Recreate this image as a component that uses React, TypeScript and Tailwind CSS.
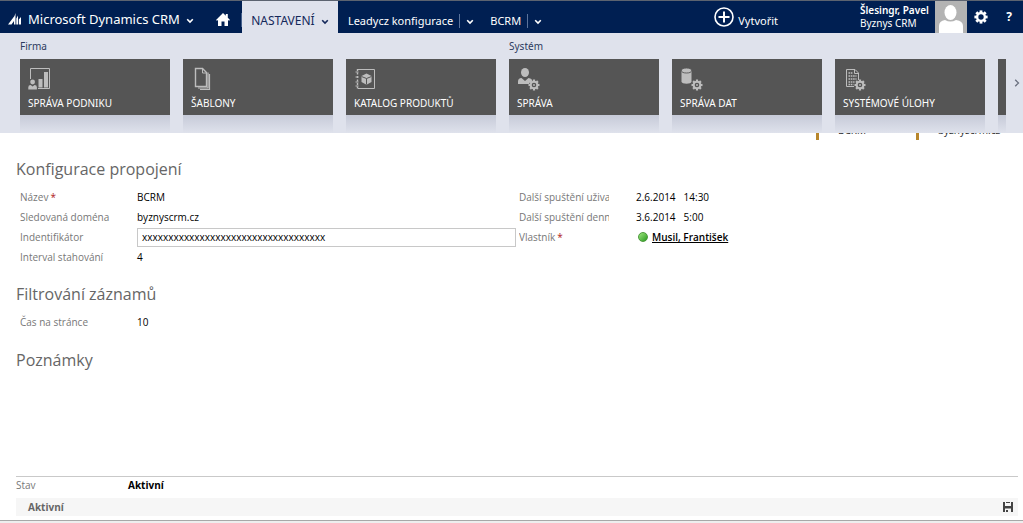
import type { ReactNode } from "react";

function Chevron({ className = "" }: { className?: string }) {
  return (
    <svg viewBox="0 0 8 6" className={`h-1.5 w-2 ${className}`} fill="none" stroke="currentColor" strokeWidth="1.6" aria-hidden="true">
      <path d="M1.2 1.2 4 4 6.8 1.2" />
    </svg>
  );
}

function Gear({ x, y, r, hole }: { x: number; y: number; r: number; hole: number }) {
  return (
    <g transform={`translate(${x} ${y})`}>
      {[0, 45, 90, 135].map((a) => (
        <rect key={a} x={-r * 0.2} y={-r} width={r * 0.4} height={r * 2} transform={`rotate(${a})`} fill="currentColor" />
      ))}
      <circle r={r * 0.78} fill="currentColor" />
      <circle r={hole} fill="#555555" />
      <circle r={hole * 0.4} fill="currentColor" />
    </g>
  );
}

function TileIcon({ children }: { children: ReactNode }) {
  return (
    <svg viewBox="0 0 24 24" className="h-6 w-6 text-[#bdbdbd]" fill="none" stroke="currentColor" aria-hidden="true">
      {children}
    </svg>
  );
}

const icons = {
  business: (
    <TileIcon>
      <path d="M2.5 12V1.5h19v20H10" />
      <g fill="currentColor" stroke="none">
        <circle cx="4.6" cy="15" r="2.4" />
        <path d="M.3 22.5v-2.2q0-2.3 2.4-2.3l1.9 1.6L6.5 18q2.400 0 2.400 2.300v2.200z" />
        <path d="M10.500 12h4v8.500h-4zM16 5h4v15.500h-4z" />
      </g>
    </TileIcon>
  ),
  templates: (
    <TileIcon>
      <path d="M4.500 1.500h7l4 4v14h-11z" strokeWidth="1.400" />
      <path d="M11.500 1.500v4.500h4" />
      <path d="M17 5.500v15.500H7M18.500 7v15.500H9" strokeWidth="1.200" />
    </TileIcon>
  ),
  catalog: (
    <TileIcon>
      <path d="M4 2.500h16.500v19H4" />
      <path d="M3.500 2v20" strokeDasharray="2 1.500" strokeWidth="1.400" />
      <path d="M1.500 5h3M1.500 10h3M1.500 15h3M1.500 19h3" strokeWidth="1" />
      <path d="m12.500 6.500 5 2.500v6l-5 2.700-5-2.700V9z" fill="currentColor" stroke="none" />
      <path d="m7.500 9.500 5 2 5-2M12.500 11.500v6" stroke="#555555" />
    </TileIcon>
  ),
  admin: (
    <TileIcon>
      <g fill="currentColor" stroke="none">
        <ellipse cx="8" cy="5.500" rx="4" ry="4.500" />
        <path d="M1 17v-2.500Q1 11 4.500 11L8 14l3.500-3q3 0 4 2.500-3 1-3.500 3.500z" />
        <Gear x={17} y={18} r={5.500} hole={2.300} />
      </g>
    </TileIcon>
  ),
  data: (
    <TileIcon>
      <g fill="currentColor" stroke="none">
        <path d="M1.500 4v10.500c0 3 10 3 10 0V4z" />
        <ellipse cx="6.500" cy="3.500" rx="5" ry="2.500" stroke="#555555" strokeWidth=".9" />
        <Gear x={17} y={18} r={5.500} hole={2.300} />
      </g>
    </TileIcon>
  ),
  jobs: (
    <TileIcon>
      <path d="M11 19.500H3.500v-17h8.500l3.500 3.500v7" />
      <path d="M11.500 2.500v4h4" />
      <path d="M5.500 6h4M5.500 9h8M5.500 12h8M5.500 15h6M5.500 17.500h5" strokeDasharray="1.600 .7" strokeWidth="1.500" />
      <g stroke="none">
        <Gear x={17} y={18} r={5.500} hole={2.300} />
      </g>
    </TileIcon>
  ),
};

const groups: { title: string; tiles: { label: string; icon?: ReactNode }[] }[] = [
  {
    title: "Firma",
    tiles: [
      { label: "SPRÁVA PODNIKU", icon: icons.business },
      { label: "ŠABLONY", icon: icons.templates },
      { label: "KATALOG PRODUKTŮ", icon: icons.catalog },
    ],
  },
  {
    title: "Systém",
    tiles: [
      { label: "SPRÁVA", icon: icons.admin },
      { label: "SPRÁVA DAT", icon: icons.data },
      { label: "SYSTÉMOVÉ ÚLOHY", icon: icons.jobs },
      { label: "" },
    ],
  },
];

function TopBar() {
  return (
    <header className="flex h-[33px] items-stretch whitespace-nowrap border-t border-[#5c6370] bg-[#001f52] text-white">
      <button type="button" className="flex items-center pl-2 pt-1">
        <svg viewBox="0 0 14 12" className="mr-1.5 h-3 w-3.5" fill="currentColor" aria-hidden="true">
          <path d="M0 11.500 6.500 3l1-3v11.500H6V8l-2.500 3.500zM8.300 11.500V5.500L10 2.500v9zM10.800 11.500V6.500L13 4v7.500z" />
        </svg>
        <span className="text-[13px] leading-5">Microsoft Dynamics CRM</span>
        <Chevron className="ml-1.5 mt-1" />
      </button>
      <button type="button" aria-label="Domů" className="ml-[22px] flex items-center pt-1">
        <svg viewBox="0 0 14 13" className="h-[13px] w-3.5" fill="currentColor" aria-hidden="true">
          <path d="M7 0 9.800 2.700V1h2v3.700L14 7l-1 .8-1-.9V13H8.500V8.500h-3V13H2V6.900l-1 .9L0 7z" />
        </svg>
      </button>
      <nav className="ml-[11px] flex items-stretch text-[11px]">
        <span className="mb-1.5 mt-3 w-px bg-[#44608c]" />
        <button type="button" className="flex w-24 items-center justify-center bg-[#dfe2ec] pt-2 text-[12px] text-[#14285a]">
          NASTAVENÍ
          <Chevron className="ml-1.5 mt-0.5" />
        </button>
        <button type="button" className="ml-2.5 flex items-center pt-2">
          Leadycz konfigurace
          <span className="ml-1.5 h-3.5 w-px bg-[#5a739c]" />
          <Chevron className="ml-1.5 mt-0.5" />
        </button>
        <button type="button" className="ml-4 flex items-center pt-2">
          BCRM
          <span className="ml-1.5 h-3.5 w-px bg-[#5a739c]" />
          <Chevron className="ml-1.5 mt-0.5" />
        </button>
      </nav>
      <div className="ml-auto flex items-stretch">
        <button type="button" className="mr-[82px] flex items-center gap-1 text-[11px]">
          <svg viewBox="0 0 20 20" className="h-5 w-5" fill="none" stroke="currentColor" strokeWidth="1.600" aria-hidden="true">
            <circle cx="10" cy="10" r="9" />
            <path d="M10 4.500v11M4.500 10h11" strokeWidth="2" />
          </svg>
          <span className="pt-2">Vytvořit</span>
        </button>
        <div className="flex w-[75px] flex-col justify-center text-[10px] leading-[13px]">
          <span className="font-semibold">Šlesingr, Pavel</span>
          <span>Byznys CRM</span>
        </div>
        <svg viewBox="0 0 32 32" className="h-8 w-8 bg-[#b3b3b3]" fill="#ffffff" aria-hidden="true">
          <ellipse cx="15.500" cy="11.500" rx="6" ry="7.500" />
          <path d="M4 32v-7q0-5 6-6 5.500 3 11 0 7 1 7 6v7z" />
        </svg>
        <button type="button" aria-label="Nastavení" className="flex w-7 items-center justify-center">
          <svg viewBox="-7 -7 14 14" className="h-3.5 w-3.5" fill="currentColor" aria-hidden="true">
            {[0, 45, 90, 135].map((a) => (
              <rect key={a} x="-1.400" y="-6.600" width="2.800" height="13.200" transform={`rotate(${a})`} />
            ))}
            <circle r="5" />
            <circle r="2.700" fill="#001f52" />
          </svg>
        </button>
        <button type="button" aria-label="Nápověda" className="flex w-7 items-center justify-center text-[12px] font-bold">
          ?
        </button>
      </div>
    </header>
  );
}

function Ribbon() {
  return (
    <section className="flex bg-[#dfe2ec]">
      <div className="flex flex-1 gap-[13px] overflow-hidden pl-5">
        {groups.map((g) => (
          <div key={g.title} className="shrink-0">
            <h2 className="h-[26px] pt-1 text-[10px] leading-[18px] text-[#2c3a5e]">{g.title}</h2>
            <div className="flex gap-[13px]">
              {g.tiles.map((t) => (
                <div key={t.label} className="w-[150px]">
                  <button type="button" className="flex h-14 w-full flex-col items-start bg-[#555555] px-2 pt-2 text-left text-[10px] leading-4 text-white">
                    <span className="h-6">{t.icon}</span>
                    <span className="pt-1">{t.label}</span>
                  </button>
                  <div className="h-[18px] bg-linear-to-b from-[#c6cad8] to-[#dfe2ec]" />
                </div>
              ))}
            </div>
          </div>
        ))}
      </div>
      <button type="button" aria-label="Další" className="flex w-[17px] items-center justify-center pl-1 text-[#6b7180]">
        <svg viewBox="0 0 6 8" className="h-2 w-1.5" fill="none" stroke="currentColor" strokeWidth="1.300" aria-hidden="true">
          <path d="m1.200.8 3.300 3.200-3.300 3.200" />
        </svg>
      </button>
    </section>
  );
}

function SummaryStrip() {
  return (
    <div className="flex h-[7px] items-end justify-end overflow-hidden leading-4 text-[#333333]">
      {["BCRM", "byznyscrm.cz"].map((v) => (
        <div key={v} className="flex h-5 w-[100px] border-l-[3px] border-[#b8862b] pl-[19px] pt-0.5">
          <span>{v}</span>
        </div>
      ))}
      <div className="w-[7px]" />
    </div>
  );
}

function Field({ label, required, children, id }: { label: string; required?: boolean; children: ReactNode; id?: string }) {
  const text = (
    <>
      {label}
      {required && <span className="ml-0.5 text-[#b02020]">*</span>}
    </>
  );
  return (
    <div className="flex h-5 items-center">
      <div className="w-[117px] shrink-0 text-[#777777]">
        <div className="w-[90px] overflow-hidden whitespace-nowrap">
          {id ? <label htmlFor={id}>{text}</label> : <span>{text}</span>}
        </div>
      </div>
      <div className="flex flex-1 items-center whitespace-nowrap font-medium text-black">{children}</div>
    </div>
  );
}

const heading = "text-[16px] leading-6 text-[#666666]";

export default function App() {
  return (
    <div className="flex min-h-screen flex-col bg-white font-['Noto_Sans',sans-serif] text-[10px] leading-4">
      <TopBar />
      <Ribbon />
      <SummaryStrip />
      <main className="flex flex-1 flex-col pl-4 pr-[5px] pt-[17px] font-['Open_Sans',sans-serif]">
        <h1 className={heading}>Konfigurace propojení</h1>
        <div className="grid grid-cols-2 items-start gap-[3px] pl-1 pr-[3px] pt-1.5">
          <div>
            <Field label="Název" required>BCRM</Field>
            <Field label="Sledovaná doména">byznyscrm.cz</Field>
            <Field label="Indentifikátor" id="identifier">
              <input
                id="identifier"
                type="text"
                defaultValue="xxxxxxxxxxxxxxxxxxxxxxxxxxxxxxxxxxx"
                className="h-[19px] w-full border border-[#c8c8c8] px-1 font-medium outline-none"
              />
            </Field>
            <Field label="Interval stahování">4</Field>
          </div>
          <div>
            <Field label="Další spuštění uživat">
              <span className="mr-2">2.6.2014</span>
              <span>14:30</span>
            </Field>
            <Field label="Další spuštění denní">
              <span className="mr-2">3.6.2014</span>
              <span>5:00</span>
            </Field>
            <Field label="Vlastník" required>
              <span className="ml-0.5 mr-1 h-2.5 w-2.5 rounded-full border border-[#4c9a3c] bg-linear-to-br from-[#9be67c] to-[#1f9a1a]" />
              <a href="#owner" className="font-semibold underline">Musil, František</a>
            </Field>
          </div>
        </div>
        <h2 className={`${heading} mt-[15px]`}>Filtrování záznamů</h2>
        <div className="pl-1 pt-1.5">
          <Field label="Čas na stránce">10</Field>
        </div>
        <h2 className={`${heading} mt-4`}>Poznámky</h2>
        <footer className="mt-auto">
          <div className="flex h-[22px] border-t border-[#c9c9c9]">
            <span className="w-28 text-[#777777]">Stav</span>
            <span className="font-bold text-black">Aktivní</span>
          </div>
          <div className="flex h-[18px] items-center justify-between bg-[#f6f6f6] pl-3 pr-[5px]">
            <span className="font-bold text-[#666666]">Aktivní</span>
            <button type="button" aria-label="Uložit">
              <svg viewBox="0 0 10 10" className="h-2.5 w-2.5" fill="#444444" aria-hidden="true">
                <path d="M0 0h2v4h6V0h2v10H8V6.500H2V10H0zM3 0h4v1H3zM3 8h2v2H3z" />
              </svg>
            </button>
          </div>
        </footer>
      </main>
      <div className="mt-1 h-[3px] border-t border-[#a8a8a8] bg-[#eeeeee]" />
    </div>
  );
}
